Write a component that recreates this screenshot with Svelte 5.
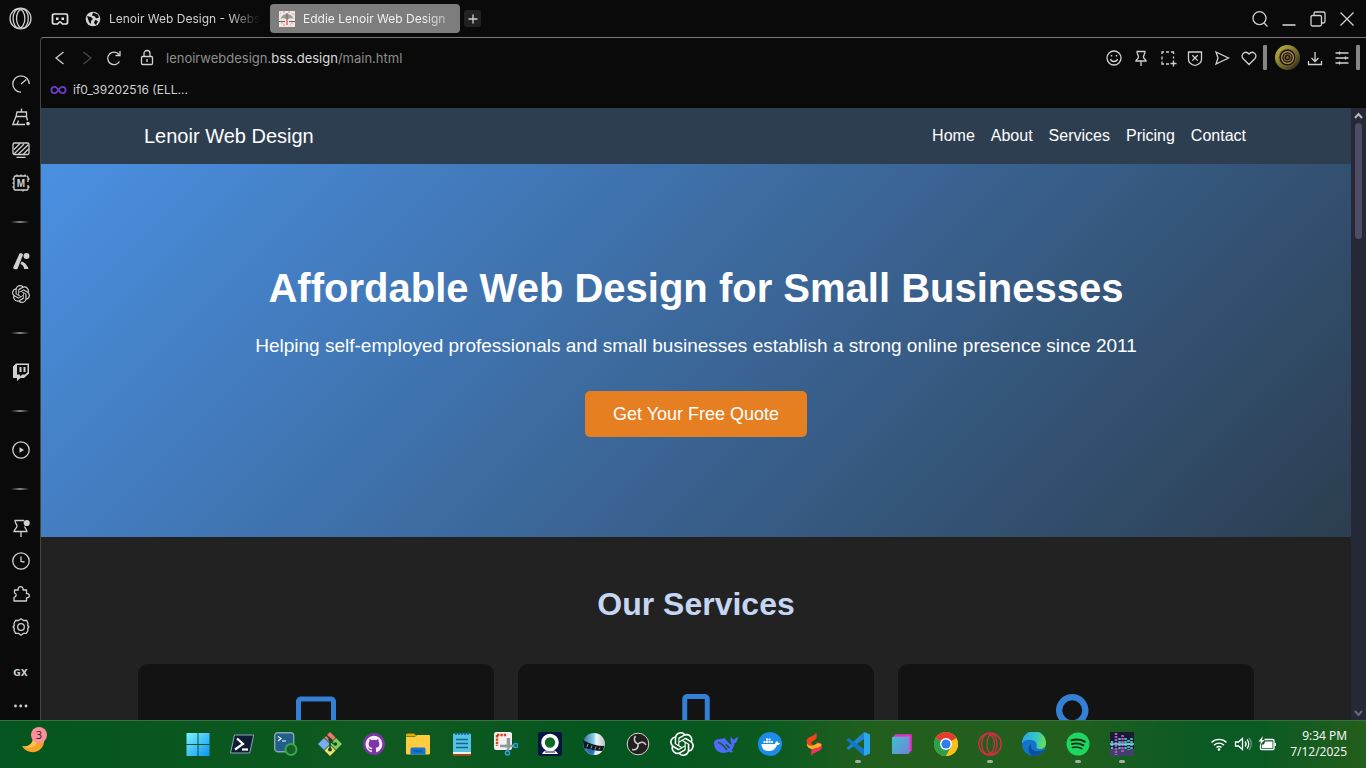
<script>
  const knot =
    'M22.282 9.821a5.985 5.985 0 0 0-.516-4.911 6.046 6.046 0 0 0-6.51-2.9A6.065 6.065 0 0 0 4.981 4.182a5.985 5.985 0 0 0-3.998 2.9 6.046 6.046 0 0 0 .743 7.097 5.98 5.98 0 0 0 .511 4.91 6.051 6.051 0 0 0 6.515 2.9A5.985 5.985 0 0 0 13.26 24a6.056 6.056 0 0 0 5.772-4.206 5.99 5.99 0 0 0 3.998-2.9 6.056 6.056 0 0 0-.748-7.073zM13.26 22.43a4.476 4.476 0 0 1-2.876-1.04l.142-.081 4.778-2.758a.795.795 0 0 0 .393-.681v-6.737l2.02 1.168a.071.071 0 0 1 .038.052v5.583a4.504 4.504 0 0 1-4.495 4.494zM3.6 18.304a4.47 4.47 0 0 1-.535-3.014l.142.085 4.783 2.759a.771.771 0 0 0 .78 0l5.843-3.369v2.332a.08.08 0 0 1-.033.062L9.74 19.95a4.5 4.5 0 0 1-6.14-1.646zM2.34 7.896a4.485 4.485 0 0 1 2.366-1.973V11.6a.766.766 0 0 0 .388.677l5.814 3.354-2.02 1.168a.076.076 0 0 1-.071 0l-4.83-2.786A4.504 4.504 0 0 1 2.34 7.872zm16.597 3.855l-5.833-3.387L15.119 7.2a.076.076 0 0 1 .071 0l4.83 2.791a4.494 4.494 0 0 1-.676 8.105v-5.678a.79.79 0 0 0-.407-.667zm2.01-3.023l-.141-.085-4.774-2.782a.776.776 0 0 0-.785 0L9.409 9.23V6.897a.066.066 0 0 1 .028-.061l4.83-2.787a4.5 4.5 0 0 1 6.68 4.66zM8.307 12.863l-2.02-1.164a.08.08 0 0 1-.038-.057V6.075a4.5 4.5 0 0 1 7.375-3.454l-.142.08L8.704 5.46a.795.795 0 0 0-.393.681zm1.097-2.365l2.602-1.5 2.607 1.5v2.999l-2.597 1.5-2.607-1.5z';

  // outline icons, 18 unit grid
  const icons = {
    speed: '<path d="M9 17.2A8.2 8.2 0 1 1 17.2 9M9 9l5.4-4.4"/>',
    broom: '<path d="M9.500 .5v3.500M5 4h9.500v4.500H4zM4 8.500L.8 16.500H13M14.500 8.500l1 4M5 16.500l1.500-4"/><circle cx="16" cy="15.500" r="1.200" fill="currentColor"/>',
    screen: '<rect x="1" y="2" width="16" height="11.500" rx="1.500"/><path d="M2 8.500l6-6M2 13l10-10M6.500 13L16.500 3.500M11.500 13l5-5M4.500 16.300h9"/>',
    memory: '<path d="M14 2H3.500A1.500 1.500 0 0 0 2 3.500V15a1 1 0 0 0 1 1h12a1 1 0 0 0 1-1v-4M16 8V3.500A1.500 1.500 0 0 0 14.500 2M5 .5V2M9 .5V2M13 .5V2M.5 5H2M.5 9H2M.5 13H2M16 5h1.500M16 13h1.500M11 16v1.500"/><text x="9" y="12.500" text-anchor="middle" font-family="Liberation Sans, Arial, sans-serif" font-size="10" font-weight="700" fill="currentColor" stroke="none">M</text>',
    aria: '<g fill="currentColor" stroke="none"><path d="M7.500 1.500c1.500-.4 3 0 3.500 1.300L5.500 17C4 17.500 2 17.300 1 16z"/><path d="M9.500 9.500c2.500.3 6 3.500 7 7.500h-4.300c-.5-2.500-1.600-4.500-3.700-5z"/><circle cx="14.500" cy="4" r="3"/></g>',
    chatgpt: `<g transform="scale(.75)"><path fill="currentColor" stroke="none" d="${knot}"/></g>`,
    twitch: '<path fill="currentColor" stroke="none" fill-rule="evenodd" d="M4 .5h13v10l-5 4.500H8.500L5 18v-3H1V3.500zM5 2v9.500h3v2l2.200-2H13l2.500-2.300V2zM7.500 4h2v5h-2zM11.500 4h2v5h-2z"/>',
    player: '<circle cx="9" cy="9" r="8.200"/><path d="M7.500 6.200v5.600L12 9z" fill="currentColor" stroke="none"/>',
    pinDot: '<path d="M2.500 1.500H12M3 1.500c0 3 2 3.500 2 5.500S2.500 10 2 12.500h13c-.3-2-2-3.500-2.500-5M9 12.500V18"/><circle cx="14.700" cy="4" r="3.100" fill="currentColor" stroke="none"/>',
    clock: '<circle cx="9" cy="9" r="8.200"/><path d="M9 4.500V9.500L12.500 10"/>',
    puzzle: '<path d="M2.500 5h3.700c-1-4.500 5.800-4.500 4.800 0h3.500v3.500c3.800-.4 3.800 4.800 0 4.400v3.100H2v-3.500c2.800-1 2.800-3.800.5-4.500z" stroke-linejoin="round"/>',
    gear: '<path d="M9 .8l2.500 1.700h3.300l1.200 3-.3 2 1.200 1.500-1.200 1.500.3 2-1.700 2.900h-3L9 17.200l-2.300-1.800h-3L2 12.500l.3-2L1.100 9l1.200-1.500-.3-2 1.500-3h3z" stroke-linejoin="round"/><circle cx="9" cy="9" r="3.300"/>',
    dots: '<g fill="currentColor" stroke="none"><circle cx="3.500" cy="9" r="1.400"/><circle cx="8.700" cy="9" r="1.400"/><circle cx="14" cy="9" r="1.400"/></g>',
    opera: '<g stroke-width="1"><circle cx="9" cy="9" r="8.200"/><ellipse cx="7.800" cy="9" rx="4.600" ry="7.600"/><ellipse cx="10.500" cy="9" rx="4.600" ry="7.600"/></g>',
    corner: '<path d="M3 4h12a1.500 1.500 0 0 1 1.500 1.500v7A1.500 1.500 0 0 1 15 14h-3.500L9.500 12h-1l-2 2H3a1.500 1.500 0 0 1-1.500-1.500v-7A1.500 1.500 0 0 1 3 4z" stroke-width="1.700"/><path d="M5 7.500h2.500v2.500H5zM10.500 7.500H13v2.500h-2.500z" fill="currentColor" stroke="none"/>',
    search: '<circle cx="8.500" cy="8.200" r="6.500"/><path d="M13 13l3.500 3.500"/>',
    minimise: '<path d="M2.500 15h13" stroke-width="1.600"/>',
    restore: '<rect x="2" y="5.500" width="10.500" height="10.500" rx="1.500"/><path d="M5 5V3.500A1.500 1.500 0 0 1 6.500 2H14.500A1.500 1.500 0 0 1 16 3.500V11.500A1.500 1.500 0 0 1 14.500 13H13"/>',
    close: '<path d="M2.500 2.500l13 13M15.500 2.500l-13 13"/>',
    plus: '<path d="M9 4.500v9M4.500 9h9"/>',
    back: '<path d="M12.500 3L5 9l7.500 6"/>',
    forward: '<path d="M5.500 3L13 9l-7.500 6"/>',
    reload: '<path d="M14.500 12.500A6.300 6.300 0 1 1 14 5.500M15 2v4.500h-4.500"/>',
    lock: '<rect x="3.500" y="7.500" width="11" height="8" rx="1.200"/><path d="M6 7.500V4.500a3 3 0 0 1 6 0v3M9 10v3"/>',
    smile: '<circle cx="9" cy="9" r="7"/><path d="M5.500 10c.8 3.300 6.200 3.300 7 0"/><path d="M6.500 6v1.500M11.500 6v1.500" stroke-width="1.500"/>',
    pin: '<path d="M4.500 2.500h9M5 2.500C5 5.500 6.500 6 6.500 8S4.500 10 4 12h10c-.5-2-2.500-2-2.500-4S13 5.500 13 2.500M9 12v5"/>',
    snapshot: '<path d="M3 5V3h2M7 3h3M12 3h2.500v2M3 7.500v3M3 12.500v2.500h2M7 15h3M14.500 7.500v2M14.500 11.500v6M11.500 14.500h6"/>',
    shield: '<path d="M2.500 3h13v7.500c0 3-3 5-6.500 6-3.500-1-6.500-3-6.500-6zM6.300 6.200l5.400 5.400M11.700 6.200l-5.400 5.400"/>',
    send: '<path d="M3 3l12.500 6L3 15l2-6z"/>',
    heart: '<path d="M9 15.500L3 9.500C-.2 5.500 5.500.8 9 5c3.500-4.200 9.200.5 6 4.500z"/>',
    download: '<path d="M9 3v9M5.500 9L9 12.500 12.500 9M2.500 12v3.500h13V12"/>',
    sliders: '<path d="M2.500 4h13M2.500 9h13M2.500 14h13M6.500 2.500v3M12.500 7.500v3M6.500 12.500v3"/>',
    infinity: '<path d="M9 9C7.500 6.500 6 5.700 4.800 5.700a3.300 3.300 0 0 0 0 6.600C6 12.300 7.500 11.500 9 9s3-3.300 4.200-3.300a3.300 3.300 0 0 1 0 6.600C12 12.300 10.500 11.500 9 9z" stroke-width="2"/>',
    wifi: '<path d="M1.500 7.500a10.600 10.600 0 0 1 15 0M4 10.200a7 7 0 0 1 10 0M6.500 12.600a3.500 3.500 0 0 1 5 0" stroke-width="1.400"/><circle cx="9" cy="14.500" r="1.300" fill="currentColor" stroke="none"/>',
    volume: '<path d="M1.500 7v4H4.500L8.500 14.500V3.500L4.500 7zM11 6.500c1.300 1.500 1.300 3.500 0 5M13 4.500c2.300 2.500 2.300 6.500 0 9"/><path d="M15 3c3 3.500 3 8.500 0 12" opacity=".4"/>',
    battery: '<path d="M6.500 4.500H15a1 1 0 0 1 1 1v8a1 1 0 0 1-1 1H3.500a1 1 0 0 1-1-1V9.500"/><path d="M7 6.500h7.500V13H4V9.500h2zM16.500 8h1.500v3h-1.500zM5 1L.5 6.500H3L2 10l4.500-5H4z" fill="currentColor" stroke="none"/>'
  };

  const sidebar = [
    { icon: 'speed', label: 'Speed Dial' },
    { icon: 'broom', label: 'GX Cleaner' },
    { icon: 'screen', label: 'Live wallpaper' },
    { icon: 'memory', label: 'Memory' },
    null,
    { icon: 'aria', label: 'Aria' },
    { icon: 'chatgpt', label: 'ChatGPT' },
    null,
    { icon: 'twitch', label: 'Twitch' },
    null,
    { icon: 'player', label: 'Player' },
    null,
    { icon: 'pinDot', label: 'Pinboards' },
    { icon: 'clock', label: 'History' },
    { icon: 'puzzle', label: 'Extensions' },
    { icon: 'gear', label: 'Settings' }
  ];

  const windowButtons = ['search', 'minimise', 'restore', 'close'];
  const pageTools = ['smile', 'pin', 'snapshot', 'shield', 'send', 'heart'];
  const navLinks = ['Home', 'About', 'Services', 'Pricing', 'Contact'];

  const services = [
    { w: 50, box: '0 0 640 512', d: 'M128 32C92.700 32 64 60.700 64 96V352h64V96H512V352h64V96c0-35.300-28.700-64-64-64H128zM19 384C9 384 0 393 0 403c0 42 35 77 77 77H563c42 0 77-35 77-77c0-10-9-19-19-19H19z' },
    { w: 30, box: '0 0 384 512', d: 'M16 64C16 28.700 44.700 0 80 0H304c35.300 0 64 28.700 64 64V448c0 35.300-28.700 64-64 64H80c-35.300 0-64-28.700-64-64V64zM224 448a32 32 0 1 0-64 0 32 32 0 1 0 64 0zM304 64H80V384H304V64z' },
    { w: 40, box: '0 0 512 512', d: 'M416 208c0 45.900-14.900 88.300-40 122.700L502.600 457.400c12.500 12.500 12.500 32.800 0 45.300s-32.800 12.500-45.300 0L330.700 376c-34.400 25.200-76.800 40-122.700 40C93.100 416 0 322.900 0 208S93.100 0 208 0S416 93.100 416 208zM208 336a128 128 0 1 0 0-256 128 128 0 1 0 0 256z' }
  ];

  // colour icons of the taskbar, 24 unit grid
  const apps = [
    { name: 'Start', art: '<defs><linearGradient id="win" x1="0" y1="0" x2="1" y2="1"><stop stop-color="#7df3ff"/><stop offset="1" stop-color="#0a93f5"/></linearGradient></defs><path fill="url(#win)" d="M.5 1h11v11H.5zM12.500 1h11v11h-11zM.5 13h11v11H.5zM12.500 13h11v11h-11z"/>' },
    { name: 'PowerShell', art: '<path d="M4.500 3H23.700L19.700 21H.5z" fill="#0f1c36" stroke="#8fa3b8"/><path d="M7 6.500l6 5.500-8 5.500" fill="none" stroke="#fff" stroke-width="2.200"/><path d="M12 17.500h6" stroke="#fff" stroke-width="2.200"/>' },
    { name: 'Terminal', art: '<rect x=".7" y=".7" width="19" height="19" rx="3" fill="#205f8c" stroke="#8ba6a8" stroke-width="1.400"/><path d="M4 4.500l3 2-3 2.500M8 9h4" fill="none" stroke="#fff" stroke-width="1.200"/><circle cx="17" cy="17.500" r="5.500" fill="#17602a" stroke="#38a843" stroke-width="2"/>' },
    { name: 'Git', art: '<path d="M12 0l5.500 5.500L12 11 6.500 5.500z" fill="#f57272"/><path d="M18 6l6 6-6 6-6-6z" fill="#83ca5a"/><path d="M6 6l6 6-6 6-6-6z" fill="#78adf5"/><path d="M12 13l5.500 5.500L12 24l-5.500-5.500z" fill="#f3e070"/><path d="M8 3l7 6.500M12 7v11M12.500 9.500l5 3.500" stroke="#0c4d1d" stroke-width="1.500"/><circle cx="12" cy="7.500" r="1.700" fill="#0c4d1d"/><circle cx="12" cy="17.500" r="1.900" fill="#0c4d1d"/><circle cx="17.500" cy="12" r="1.700" fill="#0c4d1d"/>' },
    { name: 'GitHub Desktop', art: '<circle cx="12" cy="12" r="11" fill="#7d35a5"/><g transform="translate(3.600 3.600) scale(.7)"><path fill="#f4eef8" d="M12 .3c-6.630 0-12 5.370-12 12 0 5.300 3.440 9.800 8.200 11.380.6.110.820-.260.820-.580v-2.040c-3.340.730-4.040-1.610-4.040-1.610-.550-1.380-1.340-1.750-1.340-1.750-1.090-.740.080-.730.080-.730 1.200.090 1.840 1.240 1.840 1.240 1.070 1.830 2.810 1.300 3.500 1 .1-.780.410-1.310.760-1.610-2.670-.3-5.470-1.330-5.470-5.930 0-1.310.470-2.380 1.240-3.220-.140-.3-.540-1.520.1-3.180 0 0 1.010-.320 3.300 1.230a11.500 11.500 0 0 1 6 0c2.280-1.550 3.290-1.230 3.290-1.230.640 1.660.240 2.880.120 3.180.760.840 1.230 1.910 1.230 3.220 0 4.610-2.810 5.630-5.480 5.920.420.360.810 1.100.810 2.220v3.290c0 .310.210.690.820.570A12 12 0 0 0 12 .3"/></g>' },
    { name: 'File Explorer', art: '<path d="M0 3a1.500 1.500 0 0 1 1.500-1.500H8l3 3H0z" fill="#e7a50e"/><path d="M0 5h9l2-2h12a1 1 0 0 1 1 1v17a1.500 1.500 0 0 1-1.500 1.500h-21A1.500 1.500 0 0 1 0 21z" fill="#ffcc40"/><path d="M4.500 22.500V17A1.500 1.500 0 0 1 6 15.500H18A1.500 1.500 0 0 1 19.500 17v5.500z" fill="#1273d0"/><path d="M8 19h8" stroke="#0c58a8" stroke-width="1.300"/>' },
    { name: 'Notepad', art: '<rect x="3" y="1.500" width="18" height="20" rx="1" fill="#55c3e4"/><path d="M3 20h18v2H3z" fill="#f0f0ec"/><path d="M3 22h18v2H3z" fill="#9a4a12"/><path d="M6 7.500h12M6 11.500h12M6 15.500h12" stroke="#14648c" stroke-width="1.700"/><path d="M6 0v3M9 0v3M12 0v3M15 0v3M18 0v3" stroke="#125c80" stroke-width="1.400"/>' },
    { name: 'Snipping Tool', art: '<rect width="18" height="18" rx="2" fill="#f1f1ef"/><path d="M3 3h10M3 3v11" stroke="#d8401c" stroke-width="2.400" stroke-dasharray="2.400 1"/><path d="M6 14h8V6" stroke="#8f9598" stroke-width="2.500" fill="none"/><path d="M15 6v9l-2 4M11 14h9" stroke="#8d999e" stroke-width="2.300" fill="none"/><circle cx="13.500" cy="21" r="2" fill="none" stroke="#2ba3df" stroke-width="1.600"/><circle cx="21.800" cy="13.500" r="2" fill="none" stroke="#2ba3df" stroke-width="1.600"/>' },
    { name: 'Webcam', art: '<rect width="24" height="24" rx="2" fill="#071541"/><path d="M4 22c1-2 2-3 4-3.500h8c2 .5 3 1.500 4 3.500z" fill="#fff"/><circle cx="12" cy="10.500" r="7" fill="#0c6a28" stroke="#fff" stroke-width="3.600"/><path d="M7 20h10" stroke="#071541"/>' },
    { name: 'OpenGL Viewer', art: '<defs><linearGradient id="ball" x1="0" y1="0" x2="1" y2="0"><stop stop-color="#2f6f96"/><stop offset=".5" stop-color="#8fd0f0"/><stop offset=".6" stop-color="#f4f6f6"/><stop offset="1" stop-color="#b9c4c6"/></linearGradient></defs><circle cx="12" cy="12" r="11" fill="url(#ball)"/><path d="M1 8c7 4 14 6 21.500 6l-2 5C13 19 7 17.500 2 16z" fill="#101820"/><path d="M4 16.500l9 2-2 4.500c-3 0-6-3-7-6.500z" fill="#2a6cc0"/><path d="M14 19l6 .5c-2 2-4.500 3.200-7 3.500z" fill="#e8eced"/><path d="M6 12l-1 3M10 13.500l-1 3M14 14.500l-1 3M18 15.500l-1 2" stroke="#8da3ad"/>' },
    { name: 'OBS Studio', art: '<circle cx="12" cy="12" r="10.800" fill="#231f20" stroke="#d4d4d4" stroke-width="1"/><g fill="none" stroke="#cfcfcf" stroke-width="1.600"><path d="M12 12C8 10.500 7.500 7 9.500 4"/><path d="M12 12c3-3 6.500-2 8 1"/><path d="M12 12c.8 4-2 6.500-6 5.500"/></g>' },
    { name: 'ChatGPT', art: `<path fill="#fff" d="${knot}"/>` },
    { name: 'DeepSeek', art: '<path fill="#4d6bfe" d="M0 10c.5-2 3-3 6-3 3-.2 4-1.500 5-1 0 1.500 2 3 4 5 1 1 2 1.500 3 1.500-2-3-2-5-1-8 1 2.500 2 3 3.500 3 .8-1.500 2-2 3.500-2.500-.2 3.500-1.500 5.500-3.500 6.500-.5 3-1.500 5-3 6.500.5 1 1 1.500 2 2-1.500.8-3.500.5-4.500-.5-6 3-12 1-14-4-.8-2-1-4-1-5.500z"/><path d="M4 10.500c4 .5 6.500 4 9 7.500M12 12.500l3.500 3.500" stroke="#155c20" stroke-width="1.600" fill="none"/>' },
    { name: 'Docker', art: '<circle cx="12" cy="12" r="12" fill="#1d8ce8"/><path fill="#fff" d="M3.500 12H17c.5-2 1-2.500 2-3 .7.800 1 1.500 1 2h2c-.5 1.500-1.500 2-3 2-2 5-5 6-8.500 6C6 19 3.500 16 3.500 12zM5.500 9h2v2h-2zM8 9h2v2H8zM10.500 9h2v2h-2zM13 9h2v2h-2zM8 6.500h2v2H8zM10.500 6.500h2v2h-2z"/>' },
    { name: 'Stacks', art: '<path d="M14 0c.5 4-9.500 4.500-9.500 9 0 4 3.500 5 6.500 4.500-2.500-2.500-1.500-4 1-5C15 7 15.500 4 14 0z" fill="#f4401c"/><path d="M10 24c0-4 9.500-4 10-9 .3-4-3-5-6.500-4.500 2 1.500 1.500 3.500-1.500 5C9 17 8.500 20 10 24z" fill="#f0355c"/><path d="M5 11.500c2 2.500 5 2.500 7 1.500s4-3 7.500-1c0 4-6 3.500-9 5C7 17 4.500 14.500 5 11.500z" fill="#fdb022"/>' },
    { name: 'VS Code', running: true, art: '<path d="M18 0l6 2.500v19L18 24z" fill="#29a8ee"/><path d="M18 0v7L2.500 18 .5 16z" fill="#1d86d3"/><path d="M18 24v-7L2.500 6 .5 8z" fill="#1277c8"/>' },
    { name: 'Layers', art: '<defs><linearGradient id="lay" x1="0" y1="0" x2="1" y2="1"><stop stop-color="#3ec1ce"/><stop offset="1" stop-color="#6b86d8"/></linearGradient></defs><path d="M5 2h17v17H5z" fill="#c232a6"/><path d="M3.500 3.500h17v17h-17z" fill="#e046cf"/><path d="M2 5h17v17H2z" fill="url(#lay)"/>' },
    { name: 'Chrome', art: '<circle cx="12" cy="12" r="12" fill="#fbc116"/><path d="M12 12L1.600 6a12 12 0 0 1 20.800 0z" fill="#e33b2e"/><path d="M12 12L1.600 6A12 12 0 0 0 12 24l5.200-9z" fill="#2b9f49"/><path d="M12 6h10.400L24 12l-6.800 3L12 24c7 0 12-5 12-12 0-2-.600-4-1.600-6z" fill="#fbc116"/><circle cx="12" cy="12" r="6" fill="#fff"/><circle cx="12" cy="12" r="4.600" fill="#2f7cf0"/>' },
    { name: 'Opera GX', running: true, art: '<g fill="none" stroke="#dd2b45" stroke-width="1.300"><circle cx="12" cy="12" r="11.200"/><ellipse cx="10" cy="12" rx="6.300" ry="10.400"/><ellipse cx="14" cy="12" rx="5" ry="10"/></g>' },
    { name: 'Edge', art: '<defs><linearGradient id="edg" x1="0" y1=".3" x2="1" y2=".5"><stop stop-color="#2aa5e8"/><stop offset=".6" stop-color="#35c7c0"/><stop offset="1" stop-color="#6ae04e"/></linearGradient></defs><circle cx="12" cy="12" r="12" fill="#1374cc"/><path d="M0 11A12 12 0 0 1 24 11c.2 4-3 6-6 6-2 0-4-.800-3.500-2C15.500 12 14 9 10 8 6 7 2 8 0 11z" fill="url(#edg)"/><path d="M9 12c-1 6 4 9 13 6a12 12 0 0 1-11 6C6 22 5 15 9 12z" fill="#0e4f9e"/>' },
    { name: 'Spotify', running: true, art: '<circle cx="12" cy="12" r="11.500" fill="#1ed760"/><g fill="none" stroke="#0c2a14" stroke-linecap="round"><path d="M5.500 8.300c4.500-1.300 9.500-.8 13.200 1.300" stroke-width="2.200"/><path d="M6 12c4-1.100 8-.6 11.400 1.300" stroke-width="1.900"/><path d="M6.500 15.500c3.300-.8 6.500-.5 9.400 1.200" stroke-width="1.500"/></g>' },
    { name: 'Equalizer', running: true, art: '<rect width="24" height="24" fill="#1b1a33"/><path d="M0 17h24v7H0z" fill="#42406a"/><g stroke-width="2.500" stroke-dasharray="2 1"><path d="M2 9v9M9.500 6v12M15.500 6v12M18.500 8v10M21.500 6v12" stroke="#48b8c8"/><path d="M6 1v22M12.500 3v18" stroke="#b35bc8"/></g><path d="M0 12h24" stroke="#86e6ec" stroke-width="2" opacity=".7"/>' }
  ];
</script>

{#snippet icon(name)}
  <svg class="icon" viewBox="0 0 18 18" aria-hidden="true">{@html icons[name]}</svg>
{/snippet}

<div class="desktop">
  <div class="browser">
    <div class="titlebar">
      <button class="menu" aria-label="Menu">{@render icon('opera')}</button>
      <button class="corner" aria-label="GX Corner">{@render icon('corner')}</button>
      <button class="tab">
        <svg class="favicon" viewBox="0 0 16 16" aria-hidden="true">
          <circle cx="8" cy="8" r="7.300" fill="#d4d4d4" />
          <path d="M2 5l4 1 2 2-2 2v3l-2-2zM8 1.500l-1 3 3 1 1 2 3-1-1-3zM10 9l3 1-2 4-2-2z" fill="#0a0a0a" />
        </svg>
        <span>Lenoir Web Design - Webs</span>
      </button>
      <button class="tab active">
        <svg class="favicon" viewBox="0 0 16 16" aria-hidden="true">
          <rect width="16" height="16" fill="#f0e6e4" />
          <path d="M1 2h1M4 1h2M9 1h2M13 3h2M2 12h2M12 12h2M4 14h2M11 14h1" stroke="#e89090" stroke-width="1" />
          <path d="M1.500 8c1-3.500 3.500-5 6.500-5s5.500 1.500 6.500 5l-3-1-2 1H6.500l-2-1z" fill="#9a9a9a" />
          <path d="M8 2v6M0 10.500h6M10 10.500h6" stroke="#666" />
          <path d="M8 8v6" stroke="#d03030" />
        </svg>
        <span>Eddie Lenoir Web Design</span>
      </button>
      <button class="new-tab" aria-label="New tab">{@render icon('plus')}</button>
      <div class="window-buttons">
        {#each windowButtons as name}
          <button aria-label={name}>{@render icon(name)}</button>
        {/each}
      </div>
    </div>

    <div class="body">
      <aside class="sidebar">
        {#each sidebar as item}
          {#if item}
            <button aria-label={item.label}>{@render icon(item.icon)}</button>
          {:else}
            <span class="divider"></span>
          {/if}
        {/each}
        <button class="gx">GX</button>
        <button aria-label="More">{@render icon('dots')}</button>
      </aside>

      <div class="panel">
        <div class="address">
          <button aria-label="Back">{@render icon('back')}</button>
          <button class="dim" aria-label="Forward">{@render icon('forward')}</button>
          <button aria-label="Reload">{@render icon('reload')}</button>
          <button class="lock" aria-label="Site information">{@render icon('lock')}</button>
          <a class="url" href="#top">lenoirwebdesign.<b>bss.design</b>/main.html</a>
          <div class="tools">
            {#each pageTools as name}
              <button aria-label={name}>{@render icon(name)}</button>
            {/each}
            <span class="handle"></span>
            <button class="profile" aria-label="Profile">
              <svg viewBox="0 0 24 24" aria-hidden="true">
                <defs>
                  <linearGradient id="ring" x1="0" y1="0" x2="1" y2="1">
                    <stop stop-color="#c9c83c" />
                    <stop offset=".6" stop-color="#6a6228" />
                    <stop offset="1" stop-color="#222010" />
                  </linearGradient>
                </defs>
                <circle cx="12" cy="12" r="12" fill="url(#ring)" />
                <circle cx="12" cy="12" r="8.500" fill="#7a6638" />
                <g fill="none" stroke="#17130d" stroke-width="1.300">
                  <circle cx="12" cy="12" r="2" />
                  <circle cx="12" cy="12" r="4.500" />
                  <circle cx="12" cy="12" r="7" />
                </g>
                <circle cx="12" cy="12" r="5.700" fill="none" stroke="#b08a50" />
              </svg>
            </button>
            <button aria-label="Downloads">{@render icon('download')}</button>
            <button aria-label="Easy setup">{@render icon('sliders')}</button>
            <span class="handle"></span>
          </div>
        </div>

        <div class="bookmarks">
          <a href="#bookmark">{@render icon('infinity')}if0_39202516 (ELL...</a>
        </div>

        <div class="viewport">
          <div class="page" id="top">
            <header>
              <div class="container">
                <a class="brand" href="#top">Lenoir Web Design</a>
                <nav>
                  {#each navLinks as link}
                    <a href="#{link.toLowerCase()}">{link}</a>
                  {/each}
                </nav>
              </div>
            </header>

            <section class="hero">
              <h1>Affordable Web Design for Small Businesses</h1>
              <p>Helping self-employed professionals and small businesses establish a strong online presence since 2011</p>
              <a class="cta" href="#contact">Get Your Free Quote</a>
            </section>

            <section class="services" id="services">
              <h2>Our Services</h2>
              <div class="container cards">
                {#each services as service}
                  <article>
                    <svg width={service.w} height="40" viewBox={service.box} aria-hidden="true">
                      <path d={service.d} fill="#3380d4" />
                    </svg>
                  </article>
                {/each}
              </div>
            </section>
          </div>

          <div class="scrollbar">
            <svg viewBox="0 0 15 15" aria-hidden="true"><path d="M4 10l3.500-4L11 10" stroke="#b9b9c0" /></svg>
            <span class="thumb"></span>
            <svg viewBox="0 0 15 15" aria-hidden="true"><path d="M4 6l3.500 4L11 6" stroke="#6a6a72" /></svg>
          </div>
        </div>
      </div>
    </div>
  </div>

  <footer class="taskbar">
    <button class="weather" aria-label="Weather">
      <svg viewBox="0 0 24 24" aria-hidden="true">
        <path d="M23 8c.5 8-6 13-13 12C6 19.500 2.500 17 1 14c5 1.500 10-1 11-7z" fill="#f7a428" />
        <path d="M1 14c5 1.500 10-1 11-7l4 2c0 5-6 9-15 5z" fill="#ffc34d" />
      </svg>
      <span class="badge">3</span>
    </button>
    <div class="apps">
      {#each apps as app}
        <button class:running={app.running} aria-label={app.name}>
          <svg viewBox="0 0 24 24" aria-hidden="true">{@html app.art}</svg>
        </button>
      {/each}
    </div>
    <div class="tray">
      {@render icon('wifi')}
      {@render icon('volume')}
      {@render icon('battery')}
      <time>9:34 PM<br />7/12/2025</time>
    </div>
  </footer>
</div>

<style>
  :global(body) {
    background: #0a0a0a;
  }

  .desktop {
    display: flex;
    flex-direction: column;
    height: 100vh;
    overflow: hidden;
    font-family: Inter, 'Liberation Sans', sans-serif;
    color: #d0d0d0;
  }

  button {
    display: flex;
    align-items: center;
    justify-content: center;
    padding: 0;
    border: 0;
    background: none;
    color: inherit;
    font: inherit;
  }

  a {
    color: inherit;
    text-decoration: none;
  }

  .icon {
    flex: none;
    width: 18px;
    height: 18px;
    fill: none;
    stroke: currentColor;
    stroke-width: 1.3;
  }

  .browser {
    flex: 1;
    min-height: 0;
    display: flex;
    flex-direction: column;
    background: #0a0a0a;
  }

  .titlebar {
    display: flex;
    align-items: center;
    height: 37px;
    font-size: 12px;
  }

  .menu {
    width: 40px;
  }
  .menu .icon {
    width: 23px;
    height: 23px;
  }

  .corner {
    width: 40px;
    margin-right: 2px;
    color: #e4e4e4;
  }

  .tab {
    justify-content: flex-start;
    gap: 8px;
    width: 188px;
    height: 29px;
    padding-left: 3px;
  }
  .tab span {
    flex: none;
    white-space: nowrap;
    mask-image: linear-gradient(to right, #000 80%, transparent);
  }
  .tab.active {
    width: 190px;
    padding-left: 9px;
    border-radius: 4px;
    background: #7d7d7d;
    color: #f0f0f0;
  }
  .tab.active span {
    mask-image: linear-gradient(to right, #000 85%, #0008);
  }

  .favicon {
    flex: none;
    width: 16px;
    height: 16px;
  }

  .new-tab {
    width: 17px;
    height: 17px;
    margin-left: 4px;
    border-radius: 3px;
    background: #222;
  }

  .window-buttons {
    display: flex;
    margin-left: auto;
    margin-right: 5px;
  }
  .window-buttons button {
    width: 29px;
  }

  .body {
    flex: 1;
    min-height: 0;
    display: flex;
  }

  .sidebar {
    flex: none;
    width: 40px;
    padding-top: 30px;
  }
  .sidebar button {
    width: 40px;
    height: 33px;
    padding-left: 1px;
  }
  .sidebar .gx {
    margin-top: 13px;
    font-family: 'DejaVu Sans', sans-serif;
    font-size: 9px;
    font-weight: 700;
  }

  .divider {
    display: block;
    width: 18px;
    height: 2px;
    margin: 22px auto 21px;
    background: linear-gradient(to right, transparent, #888, transparent);
  }

  .panel {
    flex: 1;
    min-width: 0;
    display: flex;
    flex-direction: column;
    border-top: 1px solid #777;
    border-left: 1px solid #444;
    border-top-left-radius: 4px;
  }

  .address {
    display: flex;
    align-items: center;
    height: 39px;
    padding: 0 5px;
  }
  .address button {
    width: 27px;
    height: 27px;
  }
  .address .dim {
    color: #484848;
  }
  .address .lock {
    margin: 0 6px;
  }

  .url {
    color: #8e8e8e;
    font-size: 13px;
  }
  .url b {
    color: #dcdcdc;
    font-weight: 400;
  }

  .tools {
    display: flex;
    align-items: center;
    margin-left: auto;
  }
  .handle {
    width: 4px;
    height: 25px;
    margin: 0 1px;
    border-radius: 1px;
    background: #858585;
  }
  .tools .profile {
    margin-left: 6px;
  }
  .profile svg {
    width: 25px;
    height: 25px;
  }

  .bookmarks {
    height: 31px;
    padding-left: 9px;
    font-size: 12px;
  }
  .bookmarks a {
    display: inline-flex;
    align-items: center;
    gap: 6px;
    height: 25px;
  }
  .bookmarks .icon {
    width: 17px;
    color: #6a3cc0;
  }

  .viewport {
    flex: 1;
    min-height: 0;
    display: flex;
  }

  .page {
    flex: 1;
    overflow: hidden;
    background: #222;
    color: #fff;
    font-family: 'Liberation Sans', Arial, sans-serif;
  }

  .container {
    box-sizing: border-box;
    max-width: 1140px;
    margin: 0 auto;
    padding: 0 12px;
  }

  header {
    background: #2d3e50;
  }
  header .container {
    display: flex;
    align-items: center;
    justify-content: space-between;
    height: 56px;
  }
  .brand {
    padding-left: 6px;
    font-size: 20px;
  }
  nav {
    display: flex;
    font-size: 16px;
  }
  nav a {
    padding: 8px;
  }

  .hero {
    padding: 100px 0;
    background: linear-gradient(135deg, #4a90e2, #2c3e50);
    text-align: center;
  }
  .hero h1 {
    margin: 0 0 20px;
    font-size: 40px;
    line-height: 48px;
  }
  .hero p {
    margin: 0 0 32px;
    font-size: 19px;
    line-height: 27px;
  }
  .cta {
    display: inline-block;
    padding: 0 28px;
    border-radius: 5px;
    background: #e67e22;
    font-size: 18px;
    line-height: 46px;
    vertical-align: top;
  }

  .services {
    padding: 48px 0;
  }
  .services h2 {
    margin: 0 0 40px;
    color: #c5d6f2;
    font-size: 32px;
    line-height: 39px;
    text-align: center;
  }
  .cards {
    display: grid;
    grid-template-columns: repeat(3, 1fr);
    gap: 24px;
  }
  .cards article {
    min-height: 220px;
    padding-top: 30px;
    border-radius: 10px;
    background: #131313;
    text-align: center;
  }

  .scrollbar {
    flex: none;
    display: flex;
    flex-direction: column;
    align-items: center;
    width: 15px;
    background: #252836;
  }
  .scrollbar svg {
    width: 15px;
    height: 15px;
    fill: none;
    stroke-width: 2;
  }
  .thumb {
    width: 7px;
    height: 116px;
    margin-bottom: auto;
    border-radius: 4px;
    background: #4d4b66;
  }

  .taskbar {
    display: flex;
    align-items: center;
    height: 48px;
    box-shadow: inset 0 1px #3a6f42;
    background: linear-gradient(to right, #04551f, #0f5a20 30%, #04551f 45%, #0a5a20 56%, #225f1e 64%, #225f1e 78%, #0a5a24 88%, #0a5a24 92%, #245e1c);
    color: #fff;
    font-family: 'Open Sans', 'Noto Sans', sans-serif;
  }

  .weather {
    position: relative;
    width: 26px;
    height: 26px;
    margin: 0 130px 0 20px;
  }
  .weather svg {
    width: 24px;
    height: 24px;
  }
  .badge {
    position: absolute;
    top: -4px;
    right: -1px;
    width: 16px;
    border-radius: 8px;
    background: #ff8f9c;
    color: #222;
    font-size: 11px;
    line-height: 16px;
  }

  .apps {
    display: flex;
  }
  .apps button {
    position: relative;
    width: 44px;
    height: 48px;
  }
  .apps svg {
    width: 24px;
    height: 24px;
  }
  .apps .running::after {
    content: '';
    position: absolute;
    bottom: 5px;
    left: 19px;
    width: 6px;
    height: 3px;
    border-radius: 2px;
    background: #9db59d;
  }

  .tray {
    display: flex;
    align-items: center;
    gap: 6px;
    margin-left: auto;
    margin-right: 19px;
  }
  .tray time {
    margin-left: 8px;
    font-size: 12px;
    line-height: 16px;
    text-align: right;
  }
</style>
